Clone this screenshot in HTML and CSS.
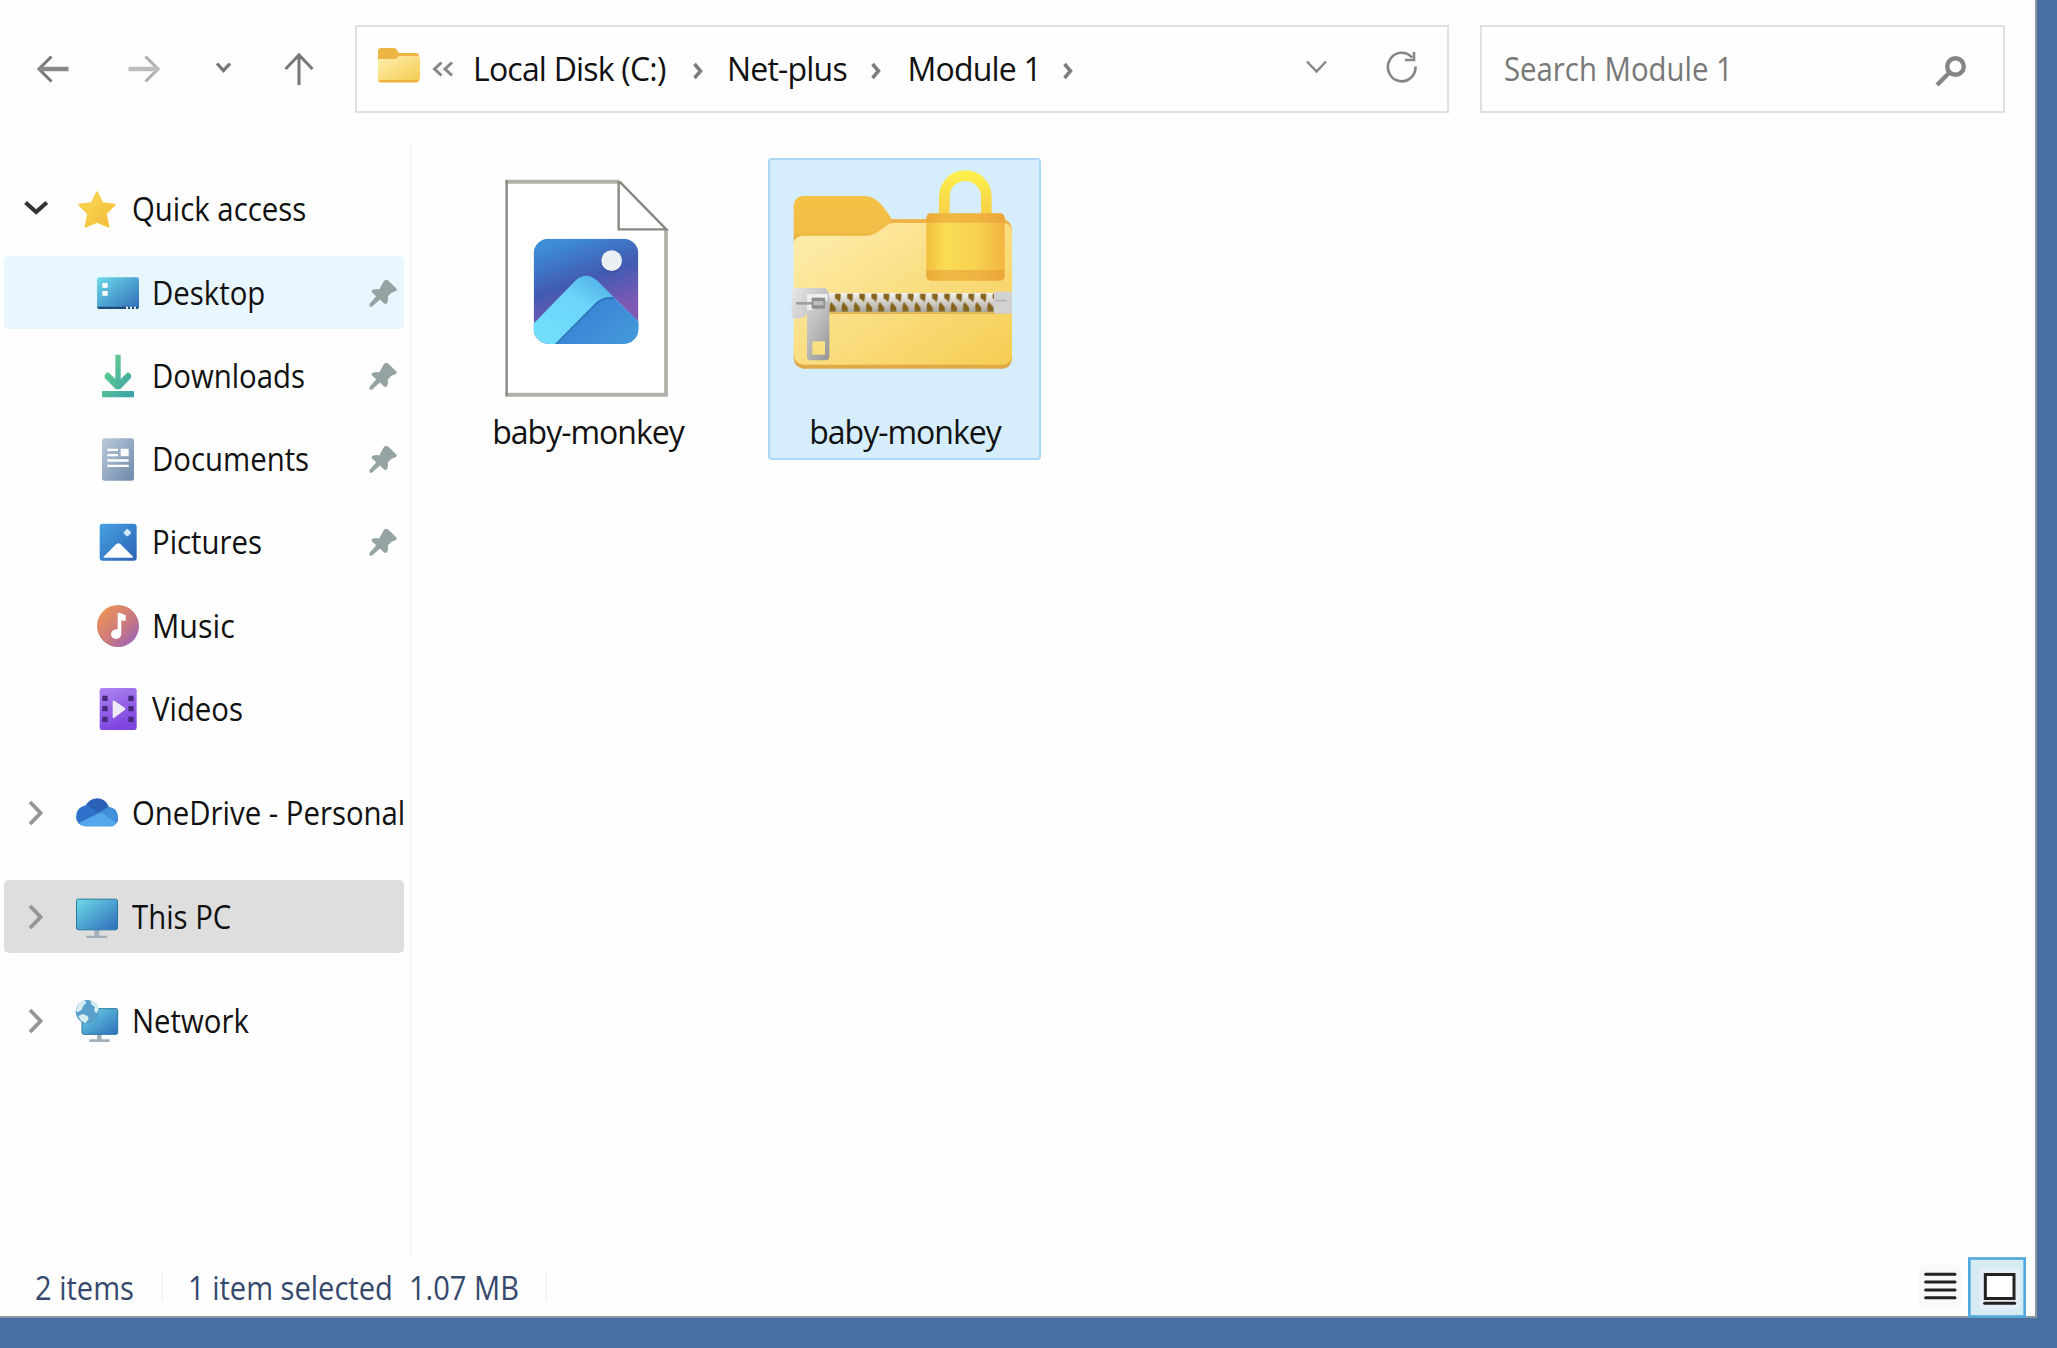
FILE: index.html
```
<!DOCTYPE html>
<html lang="en">
<head>
<meta charset="utf-8">
<title>Module 1</title>
<link rel="stylesheet" href="styles.css">
</head>
<body>
<svg class="defs" width="0" height="0" aria-hidden="true">
  <defs>
    <linearGradient id="folder" x1="0" y1="0" x2="1" y2="1"><stop offset="0" stop-color="#fdeeb0"/><stop offset="1" stop-color="#f6cd52"/></linearGradient>
    <linearGradient id="screen" x1="0" y1="0" x2="1" y2="1"><stop offset="0" stop-color="#6edbe8"/><stop offset="1" stop-color="#2e6cba"/></linearGradient>
    <linearGradient id="green" x1="0" y1="0" x2="1" y2="1"><stop offset="0" stop-color="#6bd68c"/><stop offset="1" stop-color="#38a0a8"/></linearGradient>
    <linearGradient id="slate" x1="0" y1="0" x2="1" y2="1"><stop offset="0" stop-color="#bccbdc"/><stop offset="1" stop-color="#6c88aa"/></linearGradient>
    <linearGradient id="blue" x1="0" y1="0" x2="1" y2="1"><stop offset="0" stop-color="#48a3e2"/><stop offset="1" stop-color="#2961b2"/></linearGradient>
    <linearGradient id="music" x1="0.1" y1="0.1" x2="0.9" y2="0.9"><stop offset="0" stop-color="#ec9356"/><stop offset=".55" stop-color="#cd7a7c"/><stop offset="1" stop-color="#9d62b4"/></linearGradient>
    <linearGradient id="purple" x1="0" y1="0" x2=".3" y2="1"><stop offset="0" stop-color="#ad84f0"/><stop offset="1" stop-color="#7f45df"/></linearGradient>
    <linearGradient id="star" x1="0" y1="0" x2="1" y2="1"><stop offset="0" stop-color="#fbdc55"/><stop offset="1" stop-color="#f3b73a"/></linearGradient>
    <symbol id="pin" viewBox="0 0 85 84"><path fill="#96a3a3" d="M44 8Q50-3 59 5L80 25Q90 33 77 38L68 41 57 53Q59 65 55 73Q50 77 44 72L33 62 9 84 1 83 2 75 22 52 10 41Q4 33 14 31Q24 29 31 31Z"/></symbol>
    <symbol id="expand" viewBox="0 0 72 70"><path d="M17 3L48 35 17 67" fill="none" stroke="#959595" stroke-width="11"/></symbol>
    <symbol id="crumb" viewBox="0 0 11 18"><path d="M1.500 2L7.500 9 1.500 16" fill="none" stroke="#7c7c7c" stroke-width="3.500"/></symbol>
  </defs>
</svg>

<div class="window">
  <header class="toolbar">
    <nav class="history">
      <svg viewBox="0 0 40 40"><path d="M18.500 7.500L6 20 18.500 32.500" fill="none" stroke="#777" stroke-width="3"/><path d="M6 20H35.500" stroke="#888" stroke-width="4.500"/></svg>
      <svg viewBox="0 0 40 40"><path d="M21.500 7.500L34 20 21.500 32.500" fill="none" stroke="#b0b0b0" stroke-width="3"/><path d="M34 20H4.500" stroke="#bdbdbd" stroke-width="4.500"/></svg>
      <svg viewBox="0 0 40 40"><path d="M13 14.500L19.500 21.500 26 14.500" fill="none" stroke="#777" stroke-width="3.300"/></svg>
      <svg viewBox="0 0 40 40"><path d="M20 36V6M6.500 20L20 6 33.500 20" fill="none" stroke="#777" stroke-width="3"/></svg>
    </nav>
    <div class="address">
      <svg width="42" height="35" viewBox="0 0 42 35"><path fill="#ecb544" d="M0 3Q0 0 3 0H16Q18 0 19 2L21 5H38Q41 5 41 8V32Q41 34.500 38 34.500H3Q0 34.500 0 31Z"/><path fill="url(#folder)" d="M0 11H17Q19 11 21 8H39Q42 8 42 11V30Q42 32 39 32H3Q0 32 0 30Z"/></svg>
      <svg width="22" height="16" viewBox="0 0 22 16"><path d="M9.500 1.500L2.500 8 9.500 14.500M20 1.500L13 8 20 14.500" fill="none" stroke="#868686" stroke-width="3"/></svg>
      <span>Local Disk (C:)</span>
      <svg class="sep" width="11" height="18"><use href="#crumb"/></svg>
      <span>Net-plus</span>
      <svg class="sep" width="11" height="18"><use href="#crumb"/></svg>
      <span>Module 1</span>
      <svg class="sep" width="11" height="18"><use href="#crumb"/></svg>
      <svg class="drop" width="22" height="14" viewBox="0 0 22 14"><path d="M1 1.500L10.500 11.500 20 1.500" fill="none" stroke="#858585" stroke-width="2.300"/></svg>
      <svg class="refresh" width="32" height="34" viewBox="0 0 32 34"><path d="M29.500 16.500A13.800 14.300 0 1 1 26 7.500M28 2V10H19" fill="none" stroke="#858585" stroke-width="2.600"/></svg>
    </div>
    <div class="search">
      <span class="narrow">Search Module 1</span>
      <svg width="32" height="32" viewBox="0 0 32 32"><circle cx="20.500" cy="11.500" r="8.300" fill="none" stroke="#858585" stroke-width="4.400"/><path d="M14.500 17.500L2 30" stroke="#858585" stroke-width="4.400"/></svg>
    </div>
  </header>

  <main class="body">
    <aside class="sidebar">
      <div class="row top">
        <svg class="chev" viewBox="0 0 72 70"><path d="M4 16L35 44 66 16" fill="none" stroke="#333" stroke-width="12"/></svg>
        <svg class="icon" viewBox="0 0 132 132"><path fill="url(#star)" stroke="#f8cb47" stroke-width="5" stroke-linejoin="round" d="M66 15L82 48 120 53 93 80 101 120 66 105 31 120 39 80 12 53 50 48Z"/></svg>
        <span class="narrow">Quick access</span>
      </div>
      <div class="row sub hover">
        <svg class="icon" viewBox="0 0 132 132"><rect x="3" y="19" width="126" height="95" rx="7" fill="url(#screen)"/><path d="M4 107H128Q128 114 121 114H11Q4 114 4 107Z" fill="#1d4c78"/><path d="M19 36H35V50H19ZM19 60H35V74H19ZM90 107h6v6h-6zM102 107h6v6h-6zM114 107h6v6h-6z" fill="#fff"/></svg>
        <span class="narrow">Desktop</span><svg class="pin"><use href="#pin"/></svg>
      </div>
      <div class="row sub">
        <svg class="icon" viewBox="0 0 132 132"><path fill="url(#green)" d="M58 2H74V75L95 55Q101 55 105 63L105 72 72 106H60L26 72V64Q30 55 37 55L58 75ZM20 111H112Q114 111 114 114V127Q114 130 112 130H20Q18 130 18 127V114Q18 111 20 111Z"/></svg>
        <span class="narrow">Downloads</span><svg class="pin"><use href="#pin"/></svg>
      </div>
      <div class="row sub">
        <svg class="icon" viewBox="0 0 132 132"><rect x="18" y="4" width="96" height="127" rx="8" fill="url(#slate)"/><path fill="#fff" d="M34 35H66V42H34ZM34 51H66V58H34ZM34 67H98V74H34ZM34 83H98V90H34ZM74 35H98V58H74Z"/></svg>
        <span class="narrow">Documents</span><svg class="pin"><use href="#pin"/></svg>
      </div>
      <div class="row sub">
        <svg class="icon" viewBox="0 0 132 132"><rect x="11" y="11" width="111" height="111" rx="9" fill="url(#blue)"/><path fill="#f8fbff" d="M22 111L61 72Q67 67 73 72L112 111Q112 113 108 113H26Q22 113 22 111Z"/><circle cx="94" cy="38" r="9" fill="#cfe8fb"/><path d="M94 27V49M83 38H105" stroke="#cfe8fb" stroke-width="5"/></svg>
        <span class="narrow">Pictures</span><svg class="pin"><use href="#pin"/></svg>
      </div>
      <div class="row sub">
        <svg class="icon" viewBox="0 0 132 132"><circle cx="66" cy="66" r="63" fill="url(#music)"/><path fill="#fff" d="M65 26L76 28Q80 32 89 33V51L76 49V88Q76 104 60 105Q46 104 45 91Q46 77 62 76L65 77Z"/></svg>
        <span class="narrow wide">Music</span>
      </div>
      <div class="row sub">
        <svg class="icon" viewBox="0 0 132 132"><rect x="11" y="3" width="111" height="126" rx="7" fill="url(#purple)"/><path fill="#452a7b" d="M19 26H35V42H19ZM19 57H35V73H19ZM19 89H35V105H19ZM97 26H113V42H97ZM97 57H113V73H97ZM97 89H113V105H97Z"/><path fill="#eeeafa" d="M50 43Q50 39 55 41L86 62Q90 66 86 69L55 92Q50 94 50 90Z"/></svg>
        <span class="narrow">Videos</span>
      </div>
      <div class="row top group">
        <svg class="chev"><use href="#expand"/></svg>
        <svg class="icon" viewBox="0 0 132 132"><path fill="#2f72cc" d="M30 106A28 28 0 0 1 3 77Q4 49 32 43Q44 23 68 23Q92 25 101 48L129 78V106Z"/><path fill="#2a60b5" d="M35 41Q46 22 68 22Q92 24 101 47L72 66Z"/><path fill="#418fd9" d="M72 66L100 47Q127 50 129 77Q129 101 108 106Z"/><path fill="#fefefe" d="M108 107Q125 103 131 84V107Z"/><path fill="#52a8ea" d="M12 96L77 64 123 95Q118 106 105 106H29Q18 105 12 96Z"/></svg>
        <span class="narrow">OneDrive - Personal</span>
      </div>
      <div class="row top group current">
        <svg class="chev"><use href="#expand"/></svg>
        <svg class="icon" viewBox="0 0 132 132"><path d="M58 104H73V122H97V129H34V122H58Z" fill="#a3b0ba"/><rect x="4.500" y="12.500" width="123" height="92" rx="6" fill="url(#screen)" stroke="#27799e" stroke-width="3"/></svg>
        <span class="narrow">This PC</span>
      </div>
      <div class="row top group">
        <svg class="chev"><use href="#expand"/></svg>
        <svg class="icon" viewBox="0 0 132 132"><path d="M66 104H80V121H104V129H43V121H66Z" fill="#a3b0ba"/><rect x="21" y="29" width="107" height="77" rx="5" fill="url(#screen)" stroke="#27799e" stroke-width="3"/><circle cx="37" cy="38" r="35" fill="#599fcb"/><path fill="#d8edf2" d="M4 29Q10 8 29 4L34 12 25 20 20 32 9 39 3 37ZM45 4Q64 9 71 30L65 43 57 35 60 24 50 17ZM10 51L23 45 38 51 41 60 32 72Q17 68 10 51Z"/></svg>
        <span class="narrow">Network</span>
      </div>
    </aside>

    <section class="files">
      <div class="file">
        <svg viewBox="-57 22 819 753">
          <defs>
            <linearGradient id="sky" x1=".3" y1="0" x2=".65" y2="1"><stop offset="0" stop-color="#3d8ed6"/><stop offset=".4" stop-color="#415bb2"/><stop offset=".75" stop-color="#7f58b4"/><stop offset="1" stop-color="#7f58b4"/></linearGradient>
            <linearGradient id="peak" x1="0" y1="1" x2="1" y2="0"><stop offset="0" stop-color="#74e2ff"/><stop offset=".55" stop-color="#6cd4f8"/><stop offset="1" stop-color="#3b94dc"/></linearGradient>
            <linearGradient id="slope" x1="0" y1="0" x2="1" y2=".6"><stop offset="0" stop-color="#337ad2"/><stop offset="1" stop-color="#4498da"/></linearGradient>
            <clipPath id="tile"><rect x="191" y="264" width="314" height="316" rx="45"/></clipPath>
          </defs>
          <path d="M110 92H448L589 236V732H110Z" fill="#fff"/>
          <path d="M106 93H448M106 732H593" stroke="#b0b1a8" stroke-width="12"/>
          <path d="M588 234V736" stroke="#b0b1a8" stroke-width="11"/>
          <path d="M110 89V736M446 92V236H589L448 92" fill="none" stroke="#88867f" stroke-width="7"/>
          <g clip-path="url(#tile)">
            <rect x="191" y="264" width="314" height="316" fill="url(#sky)"/>
            <path d="M180 530L316 390Q348 360 382 390L520 528V590H180Z" fill="url(#peak)"/>
            <path d="M258 584L380 458Q403 437 432 442L520 528V590H252Z" fill="url(#slope)"/>
            <path d="M258 580L380 457Q403 438 432 442" fill="none" stroke="#2a6dbb" stroke-width="5"/>
            <circle cx="425" cy="334" r="33" fill="#3a3f91" opacity=".35"/>
            <circle cx="425" cy="330" r="31" fill="#e9eff3"/>
          </g>
        </svg>
        <span>baby-monkey</span>
      </div>
      <div class="file selected">
        <svg viewBox="24 22 819 753">
          <defs>
            <linearGradient id="tab" x1="0" y1="0" x2="0" y2="1"><stop offset="0" stop-color="#f5c146"/><stop offset=".75" stop-color="#f2bd46"/><stop offset="1" stop-color="#d9a637"/></linearGradient>
            <linearGradient id="lock" x1="0" y1="0" x2="1" y2="0"><stop offset="0" stop-color="#f3bf3f"/><stop offset=".25" stop-color="#f9dc55"/><stop offset=".65" stop-color="#f7d24f"/><stop offset="1" stop-color="#f2b440"/></linearGradient>
            <linearGradient id="shackle" x1="0" y1="0" x2="0" y2="1"><stop offset="0" stop-color="#fdee4b"/><stop offset="1" stop-color="#f6ce47"/></linearGradient>
            <linearGradient id="metal" x1="0" y1="0" x2="1" y2="1"><stop offset="0" stop-color="#e6e6e6"/><stop offset=".6" stop-color="#bcbcbc"/><stop offset="1" stop-color="#929292"/></linearGradient>
            <linearGradient id="tooth" x1="0" y1="0" x2="0" y2="1"><stop offset="0" stop-color="#f4f4f0"/><stop offset="1" stop-color="#aaa69a"/></linearGradient>
            <pattern id="zip" x="207" y="427" width="36.400" height="58" patternUnits="userSpaceOnUse">
              <rect width="36.400" height="58" fill="url(#tooth)"/>
              <path d="M18 2H35V16L31 28 27 22 18 16ZM2 56V38L6 27 11 32 20 44V56Z" fill="#86641c"/>
            </pattern>
          </defs>
          <path fill="url(#tab)" d="M101 164Q103 138 130 136H316Q345 138 366 164Q389 194 395 206H735Q756 216 756 240V280H101Z"/>
          <path fill="#e0a945" d="M101 600H756V625Q752 652 730 654H130Q105 650 101 625Z"/>
          <path fill="#efb548" d="M390 206H735Q756 220 756 240V270H390Z"/>
          <path fill="url(#folder)" d="M101 275Q107 257 127 255H320Q342 254 362 238L383 222Q390 217 402 217H730Q752 220 756 240V615Q752 640 730 642H130Q105 638 101 615Z"/>
          <rect x="204" y="484" width="552" height="6" fill="#e4b33f"/>
          <rect x="207" y="427" width="496" height="58" fill="url(#zip)"/>
          <rect x="702" y="423" width="54" height="66" fill="#d2d2d0"/><path d="M706 450H740" stroke="#b5b5b5" stroke-width="5"/>
          <path d="M101 412H196Q210 425 208 445V616Q208 629 196 629H152Q141 629 141 616V490Q130 505 102 504Q96 500 95 488V425Q96 414 101 412ZM157 572V612H195V572Z" fill="url(#metal)" fill-rule="evenodd"/>
          <path d="M141 430H203V450H160V478H141Z" fill="#eee"/>
          <path d="M108 458H157" stroke="#9f9f9f" stroke-width="8"/><rect x="155" y="441" width="40" height="33" fill="#8e8e8e"/><rect x="160" y="451" width="30" height="13" fill="#bcbcbc"/>
          <path d="M553 195V138A63 63 0 0 1 679 138V195" fill="none" stroke="url(#shackle)" stroke-width="32"/>
          <rect x="499" y="188" width="235" height="202" rx="14" fill="url(#lock)"/>
          <path d="M499 216V202Q499 188 513 188H720Q734 188 734 202V216ZM499 358H734V376Q734 390 720 390H513Q499 390 499 376Z" fill="#e89b34" opacity=".55"/>
        </svg>
        <span>baby-monkey</span>
      </div>
    </section>
  </main>

  <footer class="status">
    <span class="narrow">2 items</span><i></i>
    <span class="narrow">1 item selected</span>
    <span class="narrow">1.07 MB</span><i></i>
    <div class="views">
      <svg class="list" viewBox="0 0 126 126"><rect width="126" height="126" rx="14" fill="#f8f9f8"/><path d="M20 28H108M20 51H108M20 75H108M20 98H108" stroke="#222" stroke-width="9" stroke-linecap="round"/></svg>
      <svg class="large" viewBox="0 0 174 182"><rect x="4" y="4" width="166" height="174" fill="#d5ecf5" stroke="#52a9dd" stroke-width="8"/><rect x="34" y="32" width="122" height="126" rx="12" fill="#e6eff7"/><rect x="52" y="52" width="86" height="72" fill="#fff" stroke="#222" stroke-width="9"/><path d="M50 138H140" stroke="#222" stroke-width="9" stroke-linecap="round"/></svg>
    </div>
  </footer>
</div>
</body>
</html>
```
FILE: styles.css
```
* { box-sizing: border-box; }

body {
  margin: 0;
  height: 1348px;
  overflow: hidden;
  background: #476fa1;
  color: #111;
  font: 32px/44px "Open Sans", sans-serif;
}

svg { display: block; flex: none; }
.defs { position: absolute; }

.window {
  display: flex;
  flex-direction: column;
  width: 2037px;
  height: 1318px;
  background: #fefefe;
  border: solid #8b96a3;
  border-width: 0 2px 2px 0;
}

/* Condenses labels without changing their height */
.narrow {
  transform: scaleX(.917);
  transform-origin: left;
  white-space: nowrap;
}
.wide { transform: scaleX(.95); }

/* Toolbar */
.toolbar {
  display: flex;
  height: 142px;
  padding-top: 25px;
}

.history {
  display: grid;
  grid-template-columns: 91px 79.5px 75px 40px;
  width: 322px;
  padding-left: 33px;
  margin-right: 33px;
  height: 88px;
  align-items: center;
}
.history svg { width: 40px; height: 40px; }

.address, .search {
  height: 88px;
  border: 2.500px solid #e0e0e0;
  align-items: center;
}

.address {
  display: grid;
  grid-template-columns: 54px 41px 220px 34px 144px 36.5px 155px 1fr 80px 31px;
  width: 1094px;
  padding: 0 30px 0 21px;
}
.address span {
  letter-spacing: -.8px;
  white-space: nowrap;
  margin-top: -1px;
}
.address > svg:first-child { margin-top: -8px; }
.sep { margin-top: 3px; }
.drop { margin-top: -4px; }
.refresh { margin-top: -5px; }

.search {
  display: flex;
  justify-content: space-between;
  width: 525px;
  margin-left: 31px;
  padding: 0 36px 0 22px;
  color: #777;
}
.search .narrow { margin-top: -1px; }
.search svg { margin-top: 3px; }

/* Body */
.body {
  display: flex;
  height: 1115px;
}

.sidebar {
  width: 412px;
  padding: 30.800px 8px 0 4px;
  border-right: 2px solid #f7f7f7;
}

.row {
  display: flex;
  align-items: center;
  width: 400px;
  height: 73px;
  margin-bottom: 10.250px;
  border-radius: 5px;
}
.top { padding-left: 20px; }
.top .icon { margin: 0 12.500px 0 26px; }
.sub { padding-left: 92px; }
.sub .icon { margin-right: 11.500px; }
.group { margin-top: 31px; }
.hover { background: #e8f6fe; }
.current { background: #dedede; }
.icon { width: 44px; height: 44px; }
.chev { width: 25px; height: 24px; }
.pin {
  width: 28px;
  height: 28px;
  margin-left: auto;
  margin-right: 7px;
}

.files {
  display: flex;
  gap: 44px;
  padding: 16px 0 0 39px;
}

.file {
  display: flex;
  flex-direction: column;
  align-items: center;
  width: 273px;
  height: 302px;
  border-radius: 4px;
  letter-spacing: -1px;
}
.file svg { width: 273px; height: 251px; }
.file span { padding: 1px 0 0 1px; }
.selected {
  background: #d5edfd;
  box-shadow: inset 0 0 0 2px #acd8f8;
}

/* Status bar */
.status {
  display: grid;
  grid-template-columns: 126px 27px 221px 136px 1fr auto;
  height: 59px;
  padding: 0 9px 0 34.500px;
  color: #35486d;
}
.status .narrow {
  margin-top: 9px;
  transform: scaleX(.908);
}
.status i {
  width: 2px;
  height: 29px;
  margin-top: 16px;
  background: #f5f5f5;
}
.views {
  display: flex;
  align-items: flex-start;
  gap: 7px;
}
.list { width: 42px; height: 42px; margin-top: 8px; }
.large { width: 58px; height: 61px; }
```
